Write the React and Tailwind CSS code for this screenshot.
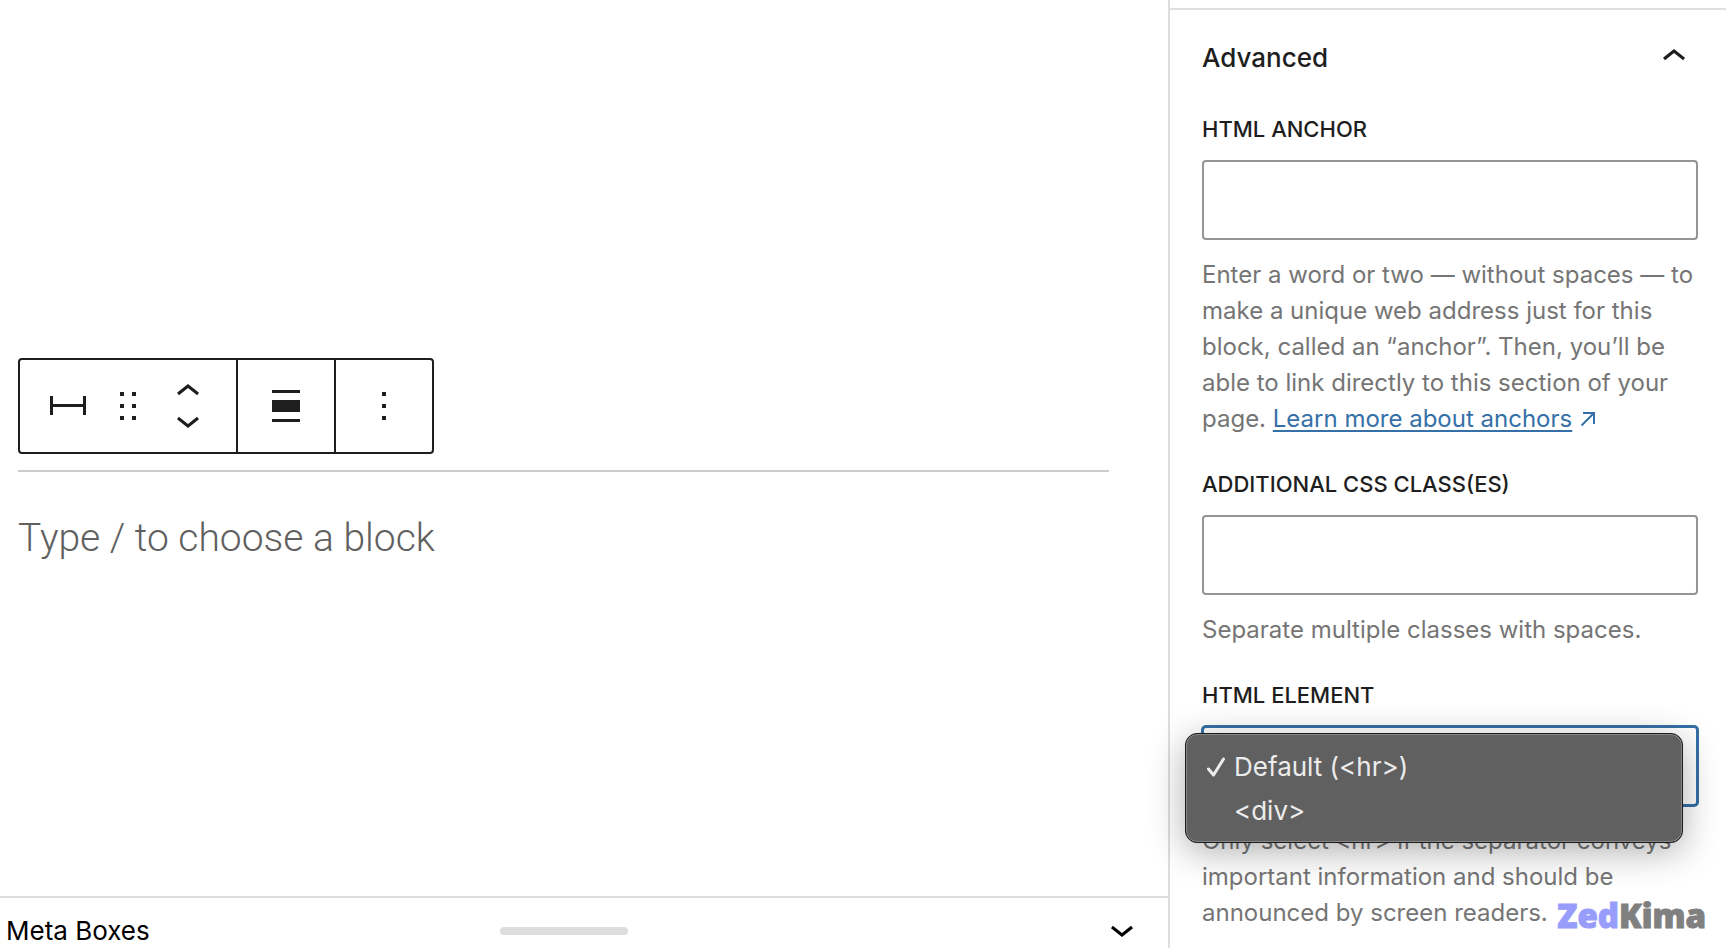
import React from "react";

const ICONS = {
  separator: "M4.5 12.5v4H3V7h1.5v3.987h15V7H21v9.5h-1.5v-4h-15Z",
  drag: "M8 7h2V5H8v2zm0 6h2v-2H8v2zm0 6h2v-2H8v2zm6-14v2h2V5h-2zm0 8h2v-2h-2v2zm0 6h2v-2h-2v2z",
  align: "M19 5.5H5V4h14v1.5ZM19 20H5v-1.5h14V20ZM5 9h14v6H5V9Z",
  more: "M13 19h-2v-2h2v2zm0-6h-2v-2h2v2zm0-6h-2V5h2v2z",
  up: "M6.5 12.4L12 8l5.5 4.4-.9 1.2L12 10l-4.5 3.6-1-1.2z",
  down: "M17.5 11.6L12 16l-5.5-4.4.9-1.2L12 14l4.5-3.6 1 1.2z",
};

function Icon({ name, viewBox = "0 0 24 24", className = "size-12" }) {
  return (
    <svg viewBox={viewBox} className={className} fill="currentColor" aria-hidden="true">
      <path d={ICONS[name]} />
    </svg>
  );
}

function ToolbarButton({ label, icon }) {
  return (
    <button type="button" aria-label={label}>
      <Icon name={icon} />
    </button>
  );
}

function BlockToolbar() {
  return (
    <div role="toolbar" aria-label="Block tools" className="flex w-fit divide-x-2 divide-[#1e1e1e] rounded border-2 border-[#1e1e1e]">
      <div className="flex items-center gap-3 px-6 py-[22px]">
        <ToolbarButton label="Separator" icon="separator" />
        <ToolbarButton label="Drag" icon="drag" />
        <div className="flex flex-col">
          <button type="button" aria-label="Move up">
            <Icon name="up" viewBox="0 7 24 12" className="h-6 w-12" />
          </button>
          <button type="button" aria-label="Move down">
            <Icon name="down" viewBox="0 5 24 12" className="h-6 w-12" />
          </button>
        </div>
      </div>
      <div className="flex items-center px-6">
        <ToolbarButton label="Align" icon="align" />
      </div>
      <div className="flex items-center px-6">
        <ToolbarButton label="Options" icon="more" />
      </div>
    </div>
  );
}

function Field({ id, label, hint, children }) {
  return (
    <div>
      <label htmlFor={id} className="mb-4 block text-[22px] leading-[30px] font-medium uppercase">
        {label}
      </label>
      {children}
      <p className="mt-[17px] text-2xl leading-9 text-[#757575]">{hint}</p>
    </div>
  );
}

const inputClass = "block h-20 w-full rounded border-2 border-[#949494] bg-white px-4 text-2xl outline-none";

function SelectMenu() {
  return (
    <ul
      role="listbox"
      aria-label="HTML element options"
      className="absolute top-[7px] right-[15px] -left-[17px] rounded-xl border border-[#1c1c1c] bg-[#606060] pt-[11px] pb-[9px] text-[26px] leading-[44px] text-[#ececec] shadow-[0_8px_36px_rgba(0,0,0,0.32)] inset-ring-1 inset-ring-[#868686]"
    >
      <li role="option" aria-selected="true" className="flex items-center pl-5">
        <svg viewBox="0 0 20 20" className="mr-2 size-5" fill="none" stroke="currentColor" strokeWidth="3" strokeLinecap="round" strokeLinejoin="round" aria-hidden="true">
          <path d="M2.5 12 7.5 18 17.5 2" />
        </svg>
        {"Default (<hr>)"}
      </li>
      <li role="option" aria-selected="false" className="pl-12">
        {"<div>"}
      </li>
    </ul>
  );
}

function Sidebar() {
  return (
    <aside className="relative w-[558px] shrink-0 border-l-2 border-[#dddddd] pt-2">
      <section className="border-t-2 border-[#e0e0e0] pt-[23px] pr-7 pl-8">
        <h2>
          <button type="button" aria-expanded="true" className="flex w-full items-center justify-between text-[26px] font-medium">
            Advanced
            <Icon name="up" />
          </button>
        </h2>
        <div className="mt-[33px] flex flex-col gap-8">
          <Field
            id="anchor"
            label="HTML anchor"
            hint={
              <>
                Enter a word or two — without spaces — to make a unique web address just for this block, called an “anchor”. Then, you’ll be able to link directly to this section of your page.{" "}
                <a href="#anchors" className="whitespace-nowrap text-[#3570a8]">
                  <span className="underline decoration-2 underline-offset-3">Learn more about anchors</span>
                  <svg viewBox="0 0 16 16" className="ml-2 inline-block size-4 align-baseline" fill="none" stroke="currentColor" strokeWidth="2" aria-hidden="true">
                    <path d="M3 2h11v11M14 2 1.5 14.5" />
                  </svg>
                </a>
              </>
            }
          >
            <input id="anchor" type="text" className={inputClass} />
          </Field>
          <Field id="classes" label="Additional CSS class(es)" hint="Separate multiple classes with spaces.">
            <input id="classes" type="text" className={inputClass} />
          </Field>
          <Field
            id="element"
            label="HTML element"
            hint="Only select <hr> if the separator conveys important information and should be announced by screen readers."
          >
            <div className="relative">
              <select id="element" defaultValue="hr" className="block h-20 w-full appearance-none rounded border-2 border-[#3570a8] bg-white px-8 text-2xl ring-1 ring-[#3570a8] outline-none">
                <option value="hr">{"Default (<hr>)"}</option>
                <option value="div">{"<div>"}</option>
              </select>
              <SelectMenu />
            </div>
          </Field>
        </div>
      </section>
      <div className="absolute right-5 bottom-3 font-['Open_Sans',sans-serif] text-[33px] leading-10 font-extrabold text-[#808080] [-webkit-text-stroke:1px_currentColor]">
        <span className="text-[#989dfc]">Zed</span>Kima
      </div>
    </aside>
  );
}

export default function App() {
  return (
    <div className="flex h-screen overflow-hidden bg-white font-[Inter,'Liberation_Sans',sans-serif] text-[#1e1e1e]">
      <main className="flex min-w-0 flex-1 flex-col">
        <div className="flex-1 pt-[358px] pr-[59px] pl-[18px]">
          <BlockToolbar />
          <hr className="mt-4 border-t-2 border-[#cccccc]" />
          <p className="mt-9 font-[Roboto,sans-serif] text-[39px] leading-[60px] font-light text-[#606060]">Type / to choose a block</p>
        </div>
        <button type="button" aria-expanded="false" className="grid grid-cols-[500fr_128px_540fr] items-center border-t-2 border-[#dddddd] pt-4 text-[26px] leading-[34px] text-black">
          <span className="pl-1.5 text-left">Meta Boxes</span>
          <span className="h-2 rounded-full bg-[#dddddd]" />
          <span className="flex justify-end pr-[22px]">
            <Icon name="down" viewBox="0 5 24 16" className="h-8 w-12" />
          </span>
        </button>
      </main>
      <Sidebar />
    </div>
  );
}
